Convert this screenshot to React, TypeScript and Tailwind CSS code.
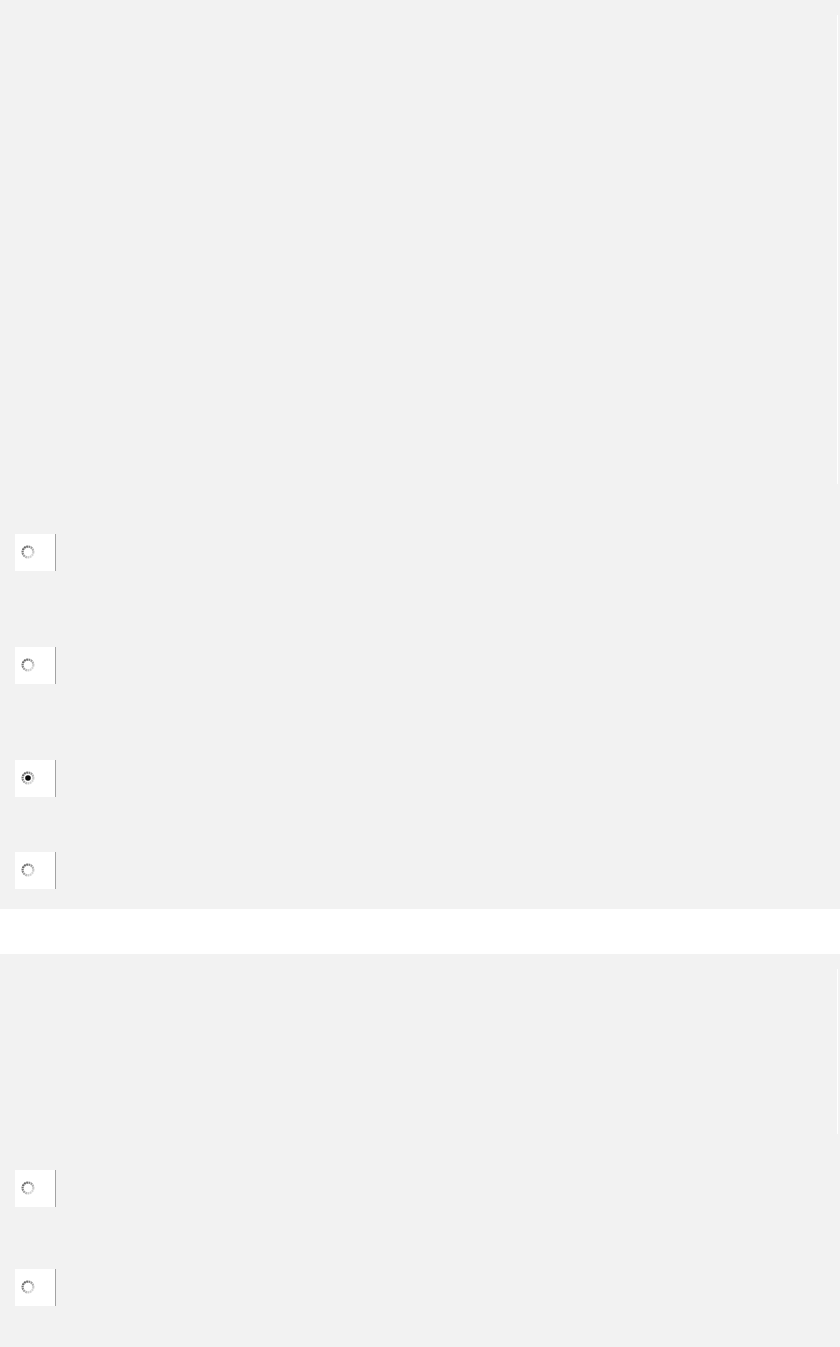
const RadioMark = ({ checked = false }: { checked?: boolean }) => (
  <svg width="14" height="14" viewBox="0 0 14 14" className="block">
    <defs>
      <linearGradient id="rim" x1="0" y1="0" x2="1" y2="1">
        <stop offset="0" stopColor="#4f4f4f" />
        <stop offset="0.45" stopColor="#9a9a9a" />
        <stop offset="1" stopColor="#ececec" />
      </linearGradient>
    </defs>
    <circle cx="7" cy="7" r="5.4" fill="#ffffff" stroke="url(#rim)" strokeWidth="2.2" strokeDasharray="1.8 0.5" />
    {checked && <circle cx="7" cy="7" r="2.8" fill="#0a0a0a" />}
  </svg>
);

function OptionBox({ checked = false }: { checked?: boolean }) {
  return (
    <div className="flex h-[37px] w-[41px] items-center border-r border-[#a3a3a3] bg-white pl-[6px] pb-[1px]">
      <RadioMark checked={checked} />
    </div>
  );
}

export default function App() {
  return (
    <div className="min-h-[1347px] w-[840px] bg-[#f2f2f2]">
      {/* first block */}
      <div className="flex h-[909px]">
        <div className="flex flex-1 flex-col pl-[15px] pt-[534px]">
          <OptionBox />
          <div className="mt-[76px]">
            <OptionBox />
          </div>
          <div className="mt-[76px]">
            <OptionBox checked />
          </div>
          <div className="mt-[55px]">
            <OptionBox />
          </div>
        </div>
        <div className="mr-[2px] mt-[15px] h-[469px] w-px bg-white" />
      </div>

      <div className="h-[45px] bg-white" />

      {/* second block */}
      <div className="flex h-[393px]">
        <div className="flex flex-1 flex-col pl-[15px] pt-[216px]">
          <OptionBox />
          <div className="mt-[62px]">
            <OptionBox />
          </div>
        </div>
        <div className="mr-[2px] mt-[15px] h-[165px] w-px bg-white" />
      </div>
    </div>
  );
}
